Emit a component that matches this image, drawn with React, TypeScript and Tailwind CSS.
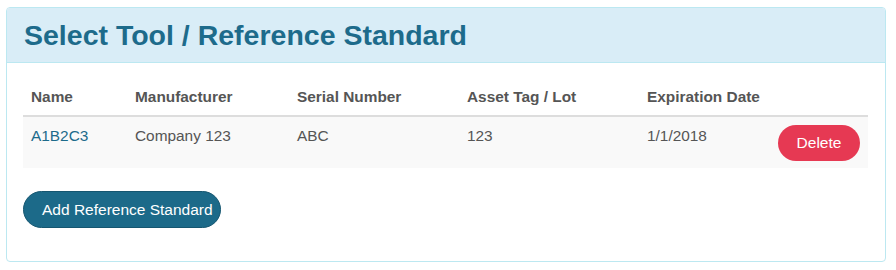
export default function App() {
  const font = { fontFamily: '"Liberation Sans", Arial, sans-serif' };
  return (
    <div className="w-[896px] h-[270px] bg-white pt-[7px] pl-[6px] pr-[10px]" style={font}>
      <div className="border border-[#bce8f1] rounded-[4px] h-[255px] flex flex-col">
        <div className="bg-[#d9edf7] border-b border-[#bce8f1] h-[55px] rounded-t-[3px] flex items-center pl-[17px]">
          <h1 className="text-[28.5px] font-bold text-[#1d6b8b] leading-none pt-[1px]">Select Tool / Reference Standard</h1>
        </div>
        <div className="px-[16px] pt-[15px]">
          <table className="w-[845px] border-collapse text-[15.4px] text-[#555]">
            <thead>
              <tr className="border-b-2 border-[#ddd]">
                <th className="w-[104px] text-left font-bold px-[8px] pt-[9px] pb-[8px] leading-[20px]">Name</th>
                <th className="w-[162px] text-left font-bold px-[8px] pt-[9px] pb-[8px] leading-[20px]">Manufacturer</th>
                <th className="w-[170px] text-left font-bold px-[8px] pt-[9px] pb-[8px] leading-[20px]">Serial Number</th>
                <th className="w-[180px] text-left font-bold px-[8px] pt-[9px] pb-[8px] leading-[20px]">Asset Tag / Lot</th>
                <th className="w-[131px] text-left font-bold px-[8px] pt-[9px] pb-[8px] leading-[20px]">Expiration Date</th>
                <th className="px-[8px]"></th>
              </tr>
            </thead>
            <tbody>
              <tr className="bg-[#f9f9f9]">
                <td className="align-top px-[8px] pt-[9px] leading-[20px] text-[#1d6b8b]">A1B2C3</td>
                <td className="align-top px-[8px] pt-[9px] leading-[20px]">Company 123</td>
                <td className="align-top px-[8px] pt-[9px] leading-[20px]">ABC</td>
                <td className="align-top px-[8px] pt-[9px] leading-[20px]">123</td>
                <td className="align-top px-[8px] pt-[9px] leading-[20px]">1/1/2018</td>
                <td className="align-top px-[8px] pt-[8px] pb-[7px] text-right">
                  <button className="w-[82px] h-[36px] rounded-full bg-[#e63953] text-white text-[15.5px] leading-none">Delete</button>
                </td>
              </tr>
            </tbody>
          </table>
          <button className="mt-[23px] w-[198px] h-[37px] rounded-full bg-[#1c6a89] border border-[#155670] text-white text-[15.5px] leading-none text-left pl-[18px]">Add Reference Standard</button>
        </div>
      </div>
    </div>
  );
}
